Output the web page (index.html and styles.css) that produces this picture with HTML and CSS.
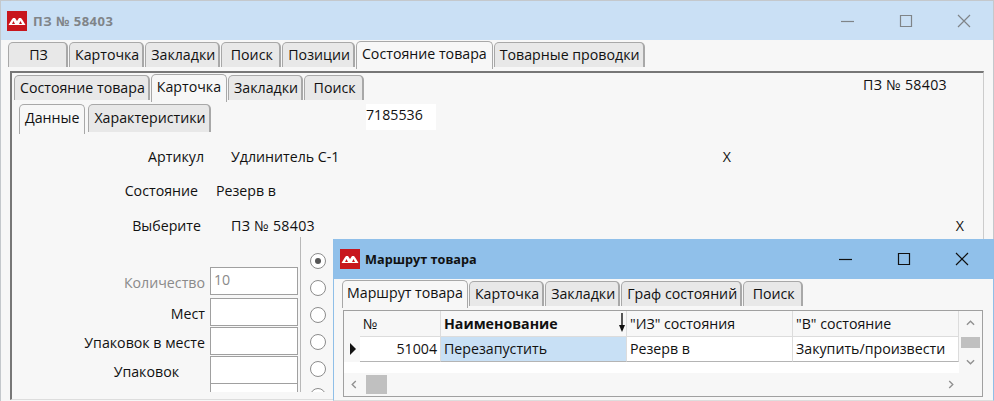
FILE: index.html
```html
<!DOCTYPE html>
<html lang="ru">
<head>
  <meta charset="UTF-8" />
  <title>ПЗ № 58403</title>
  <link rel="stylesheet" href="styles.css">
</head>
<body>

  <div class="window">
    <header class="titlebar">
      <svg class="logo" viewBox="0 0 20 20"><rect width="20" height="20" fill="#c8161d"/><path fill-rule="evenodd" d="M1.500 14l3-5 1.500-2h2l2 3 2-3h2l1.500 2 3 5zM5 13h3l-1.500-3zM12 13h3l-1.500-3z" fill="#fff"/></svg>
      <span class="title-text">ПЗ № 58403</span>
      <div class="win-buttons">
        <svg viewBox="0 0 14 14"><path d="M0 7.500h13" /></svg>
        <svg viewBox="0 0 14 14"><path d="M1.500 1.500h11v11h-11z" /></svg>
        <svg viewBox="0 0 14 14"><path d="M1 1l12 12M13 1l-12 12" /></svg>
      </div>
    </header>

    <!-- Main tabs -->
    <div class="tabs main-tabs">
      <div class="tab tab-pz">ПЗ</div>
      <div class="tab">Карточка</div>
      <div class="tab">Закладки</div>
      <div class="tab">Поиск</div>
      <div class="tab">Позиции</div>
      <div class="tab active">Состояние товара</div>
      <div class="tab">Товарные проводки</div>
    </div>

    <main class="panel">
      <div class="panel-head">
        <div class="tabs">
          <div class="tab">Состояние товара</div>
          <div class="tab active">Карточка</div>
          <div class="tab">Закладки</div>
          <div class="tab">Поиск</div>
        </div>
        <span class="doc-name">ПЗ № 58403</span>
      </div>

      <div class="sub-head">
        <div class="tabs">
          <div class="tab active">Данные</div>
          <div class="tab">Характеристики</div>
        </div>
        <div class="code-box">7185536</div>
      </div>

      <div class="info-row row-article">
        <span class="info-label">Артикул</span>
        <span class="info-value">Удлинитель С-1</span>
        <span class="info-x">X</span>
      </div>
      <div class="info-row row-state">
        <span class="info-label">Состояние</span>
        <span class="info-value">Резерв в</span>
      </div>
      <div class="info-row row-choose">
        <span class="info-label">Выберите</span>
        <span class="info-value">ПЗ № 58403</span>
        <span class="info-x">X</span>
      </div>

      <div class="lower">
        <div class="fields">
          <div class="field field-qty disabled"><label>Количество</label><div class="input">10</div></div>
          <div class="field"><label>Мест</label><div class="input"></div></div>
          <div class="field"><label>Упаковок в месте</label><div class="input"></div></div>
          <div class="field field-pack"><label>Упаковок</label><div class="input"></div></div>
          <div class="field"><label></label><div class="input"></div></div>
        </div>
        <div class="radios">
          <span class="radio checked"></span>
          <span class="radio"></span>
          <span class="radio"></span>
          <span class="radio"></span>
          <span class="radio"></span>
          <span class="radio"></span>
        </div>
      </div>
    </main>
  </div>

  <!-- Route dialog -->
  <section class="dialog">
    <header class="dialog-bar">
      <svg class="logo" viewBox="0 0 20 20"><rect width="20" height="20" fill="#c8161d"/><path fill-rule="evenodd" d="M1.500 14l3-5 1.500-2h2l2 3 2-3h2l1.500 2 3 5zM5 13h3l-1.500-3zM12 13h3l-1.500-3z" fill="#fff"/></svg>
      <span class="dialog-title">Маршрут товара</span>
      <div class="win-buttons dark">
        <svg viewBox="0 0 14 14"><path d="M0 7.500h13" /></svg>
        <svg viewBox="0 0 14 14"><path d="M1.500 1.500h11v11h-11z" /></svg>
        <svg viewBox="0 0 14 14"><path d="M1 1l12 12M13 1l-12 12" /></svg>
      </div>
    </header>

    <div class="tabs dialog-tabs">
      <div class="tab active">Маршрут товара</div>
      <div class="tab">Карточка</div>
      <div class="tab">Закладки</div>
      <div class="tab">Граф состояний</div>
      <div class="tab">Поиск</div>
    </div>

    <div class="grid-box">
      <div class="grid-main">
        <div class="grid">
          <div class="cell head c-mark"></div>
          <div class="cell head c-num">№</div>
          <div class="cell head c-name"><b>Наименование</b>
            <svg class="sort" viewBox="0 0 8 20"><path d="M4 0v14" stroke="#111" stroke-width="1.400"/><path d="M1 12h6l-3 7z" fill="#111"/></svg>
          </div>
          <div class="cell head c-from">"ИЗ" состояния</div>
          <div class="cell head c-to">"В" состояние</div>

          <div class="cell head c-mark"><span class="row-arrow"></span></div>
          <div class="cell c-num num">51004</div>
          <div class="cell c-name selected">Перезапустить</div>
          <div class="cell c-from">Резерв в</div>
          <div class="cell c-to">Закупить/произвести</div>
        </div>
        <div class="vscroll">
          <svg viewBox="0 0 10 6"><path d="M1 5l4-4 4 4" /></svg>
          <span class="vthumb"></span>
          <svg viewBox="0 0 10 6"><path d="M1 1l4 4 4-4" /></svg>
        </div>
      </div>
      <div class="hscroll">
        <svg viewBox="0 0 6 10"><path d="M5 1l-4 4 4 4" /></svg>
        <span class="hthumb"></span>
        <svg class="hnext" viewBox="0 0 6 10"><path d="M1 1l4 4-4 4" /></svg>
      </div>
    </div>
  </section>

</body>
</html>
```

FILE: styles.css
```css
* {
  box-sizing: border-box;
}

html, body {
  margin: 0;
  padding: 0;
  width: 994px;
  height: 401px;
  overflow: hidden;
}

body {
  font-family: "Open Sans", "Noto Sans", sans-serif;
  font-size: 14.2px;
  color: #111;
  background: #f7f7f7;
  position: relative;
}

.window {
  height: 401px;
  border-top: 1px solid #c4c8cc;
  border-left: 1px solid #c4c8cc;
  border-right: 1px solid #c4c8cc;
}

.titlebar {
  height: 39px;
  background: #cae0f5;
  display: flex;
  align-items: center;
  padding-left: 6px;
}

.logo {
  width: 20px;
  height: 20px;
  margin-right: 5px;
  flex: none;
}

.title-text {
  font-size: 13px;
  letter-spacing: 0.5px;
  font-weight: 700;
  color: #808488;
  margin-left: 1px;
}

.win-buttons {
  margin-left: auto;
  display: flex;
  gap: 44px;
  padding-right: 22px;
}

.win-buttons svg {
  width: 14px;
  height: 14px;
  fill: none;
  stroke: #7f8488;
  stroke-width: 1.200;
}

.win-buttons.dark {
  padding-right: 24px;
}

.win-buttons.dark svg {
  stroke: #111;
}

/* tabs */
.tabs {
  display: flex;
  align-items: flex-start;
}

.tab {
  min-width: 60px;
  height: 25px;
  padding: 0 3px 0 5px;
  line-height: 23px;
  text-align: center;
  background: #e8e8e8;
  border: 1px solid #a8a8a8;
  border-bottom: none;
  border-right-width: 2px;
  border-radius: 5px 5px 0 0;
  white-space: nowrap;
  margin-right: 1px;
}

.tab.active {
  background: #f7f7f7;
  height: 28px;
  margin-top: -1px;
  padding: 0 5px;
  border-right-width: 1px;
}

.main-tabs {
  height: 28px;
  padding: 2px 0 0 7px;
}

.tab-pz {
  width: 60px;
}

.panel {
  position: relative;
  margin: 3px 0 0 9px;
  width: 974px;
  height: 329px;
  border-top: 2px solid #777;
  border-left: 2px solid #777;
  border-right: 1px solid #ccc;
  border-bottom: 1px solid #ddd;
  padding: 2px 0 0 2px;
}

.panel-head {
  display: flex;
  justify-content: space-between;
  height: 28px;
}

.doc-name {
  padding: 0 36px 0 0;
  letter-spacing: 0.3px;
}

.sub-head {
  display: flex;
  height: 30px;
  padding: 1px 0 0 5px;
}

.sub-head .tabs {
  width: 347px;
  flex: none;
}

.sub-head .tab {
  height: 28px;
  line-height: 26px;
}

.sub-head .tab.active {
  height: 30px;
  margin-top: 0;
  margin-right: 3px;
  line-height: 25px;
}

.code-box {
  width: 70px;
  height: 26px;
  background: #fff;
  line-height: 21px;
}

.info-row {
  position: relative;
  display: flex;
  height: 34px;
  align-items: center;
}

.info-label {
  text-align: right;
  flex: none;
}

.row-article { margin-top: 6px; }
.row-article .info-label { width: 190px; margin-right: 27px; }
.row-state .info-label { width: 184px; margin-right: 18px; }
.row-choose { height: 24px; margin-top: 6px; }
.row-choose .info-label { width: 187px; margin-right: 30px; }
.row-choose .info-value { letter-spacing: 0.3px; }

.info-x {
  margin-left: auto;
}

.row-article .info-x { margin-right: 252px; }
.row-choose .info-x { margin-right: 19px; }

/* lower form */
.lower {
  display: flex;
  height: 155px;
  overflow: hidden;
}

.fields {
  width: 287px;
  padding-top: 30px;
  border-right: 1px solid #b8b8b8;
  height: 155px;
  flex: none;
}

.field {
  display: flex;
  justify-content: flex-end;
  align-items: flex-start;
  height: 29px;
  padding-right: 2px;
}

.field-qty {
  height: 31px;
}

.field-pack {
  height: 27px;
}

.field label {
  margin-right: 5px;
  line-height: 28px;
  margin-top: 2px;
}

.field-pack label {
  margin-right: 31px;
}

.field.disabled,
.disabled .input {
  color: #8a8a8a;
}

.input {
  width: 88px;
  height: 28px;
  background: #fff;
  border: 1px solid #a0a0a0;
  padding-left: 3px;
  line-height: 24px;
  flex: none;
}

.radios {
  display: flex;
  flex-direction: column;
  gap: 11px;
  padding: 16px 0 0 9px;
}

.radio {
  width: 16px;
  height: 16px;
  border-radius: 50%;
  border: 1px solid #8c8c8c;
  background: #fff;
  flex: none;
  display: flex;
  align-items: center;
  justify-content: center;
}

.radio.checked::after {
  content: "";
  width: 6px;
  height: 6px;
  border-radius: 50%;
  background: #555;
}

/* dialog over the window */
.dialog {
  position: absolute;
  left: 333px;
  top: 239px;
  width: 661px;
  height: 162px;
  background: #f7f7f7;
  border-left: 1px solid #8fbfe8;
  border-right: 1px solid #8fbfe8;
  border-bottom: 1px solid #ddd;
}

.dialog-bar {
  height: 40px;
  background: #90c0ea;
  display: flex;
  align-items: center;
  padding-left: 6px;
}

.dialog-title {
  font-size: 12.700px;
  font-weight: 700;
  color: #111;
}

.dialog-tabs {
  height: 27px;
  padding: 2px 0 0 8px;
}

.dialog-tabs .tab.active {
  padding: 0 4px;
}

.grid-box {
  margin: 4px 0 0 9px;
  width: 640px;
  height: 87px;
  border: 1px solid #a0a0a0;
  display: flex;
  flex-direction: column;
}

.grid-main {
  display: flex;
  height: 62px;
}

.grid {
  display: grid;
  grid-template-columns: 16px 81px 186px 166px 166px;
  grid-template-rows: 26px 25px;
  align-content: start;
  flex: none;
  width: 615px;
  background: #fff;
}

.cell {
  position: relative;
  background: #fff;
  border-right: 1px solid #dcdcdc;
  border-bottom: 1px solid #b4b4b4;
  padding: 0 3px;
  line-height: 23px;
  white-space: nowrap;
  overflow: hidden;
}

.cell.head {
  background: #f7f7f7;
  border-bottom: 1px solid #dcdcdc;
  line-height: 26px;
}

.cell.head.c-mark {
  border-bottom: none;
  border-right: none;
  padding: 0;
}

.num {
  text-align: right;
}

.selected {
  background: #c8e0f5;
}

.sort {
  position: absolute;
  right: 0;
  top: 2px;
  width: 8px;
  height: 20px;
}

.row-arrow {
  position: absolute;
  left: 6px;
  top: 6px;
  border-left: 6px solid #111;
  border-top: 6px solid transparent;
  border-bottom: 6px solid transparent;
}

.vscroll {
  width: 23px;
  display: flex;
  flex-direction: column;
  align-items: center;
  padding-top: 9px;
}

.vscroll svg,
.hscroll svg {
  fill: none;
  stroke: #909090;
  stroke-width: 1.500;
  flex: none;
}

.vscroll svg {
  width: 9px;
  height: 6px;
}

.vthumb {
  width: 19px;
  height: 11px;
  background: #c0c0c0;
  margin: 11px 0 11px;
  flex: none;
}

.hscroll {
  height: 23px;
  display: flex;
  align-items: center;
  padding: 0 7px;
}

.hscroll svg {
  width: 6px;
  height: 9px;
}

.hthumb {
  width: 21px;
  height: 19px;
  background: #c0c0c0;
  margin-left: 9px;
}

.hnext {
  margin-left: auto;
  margin-right: 21px;
}
```
